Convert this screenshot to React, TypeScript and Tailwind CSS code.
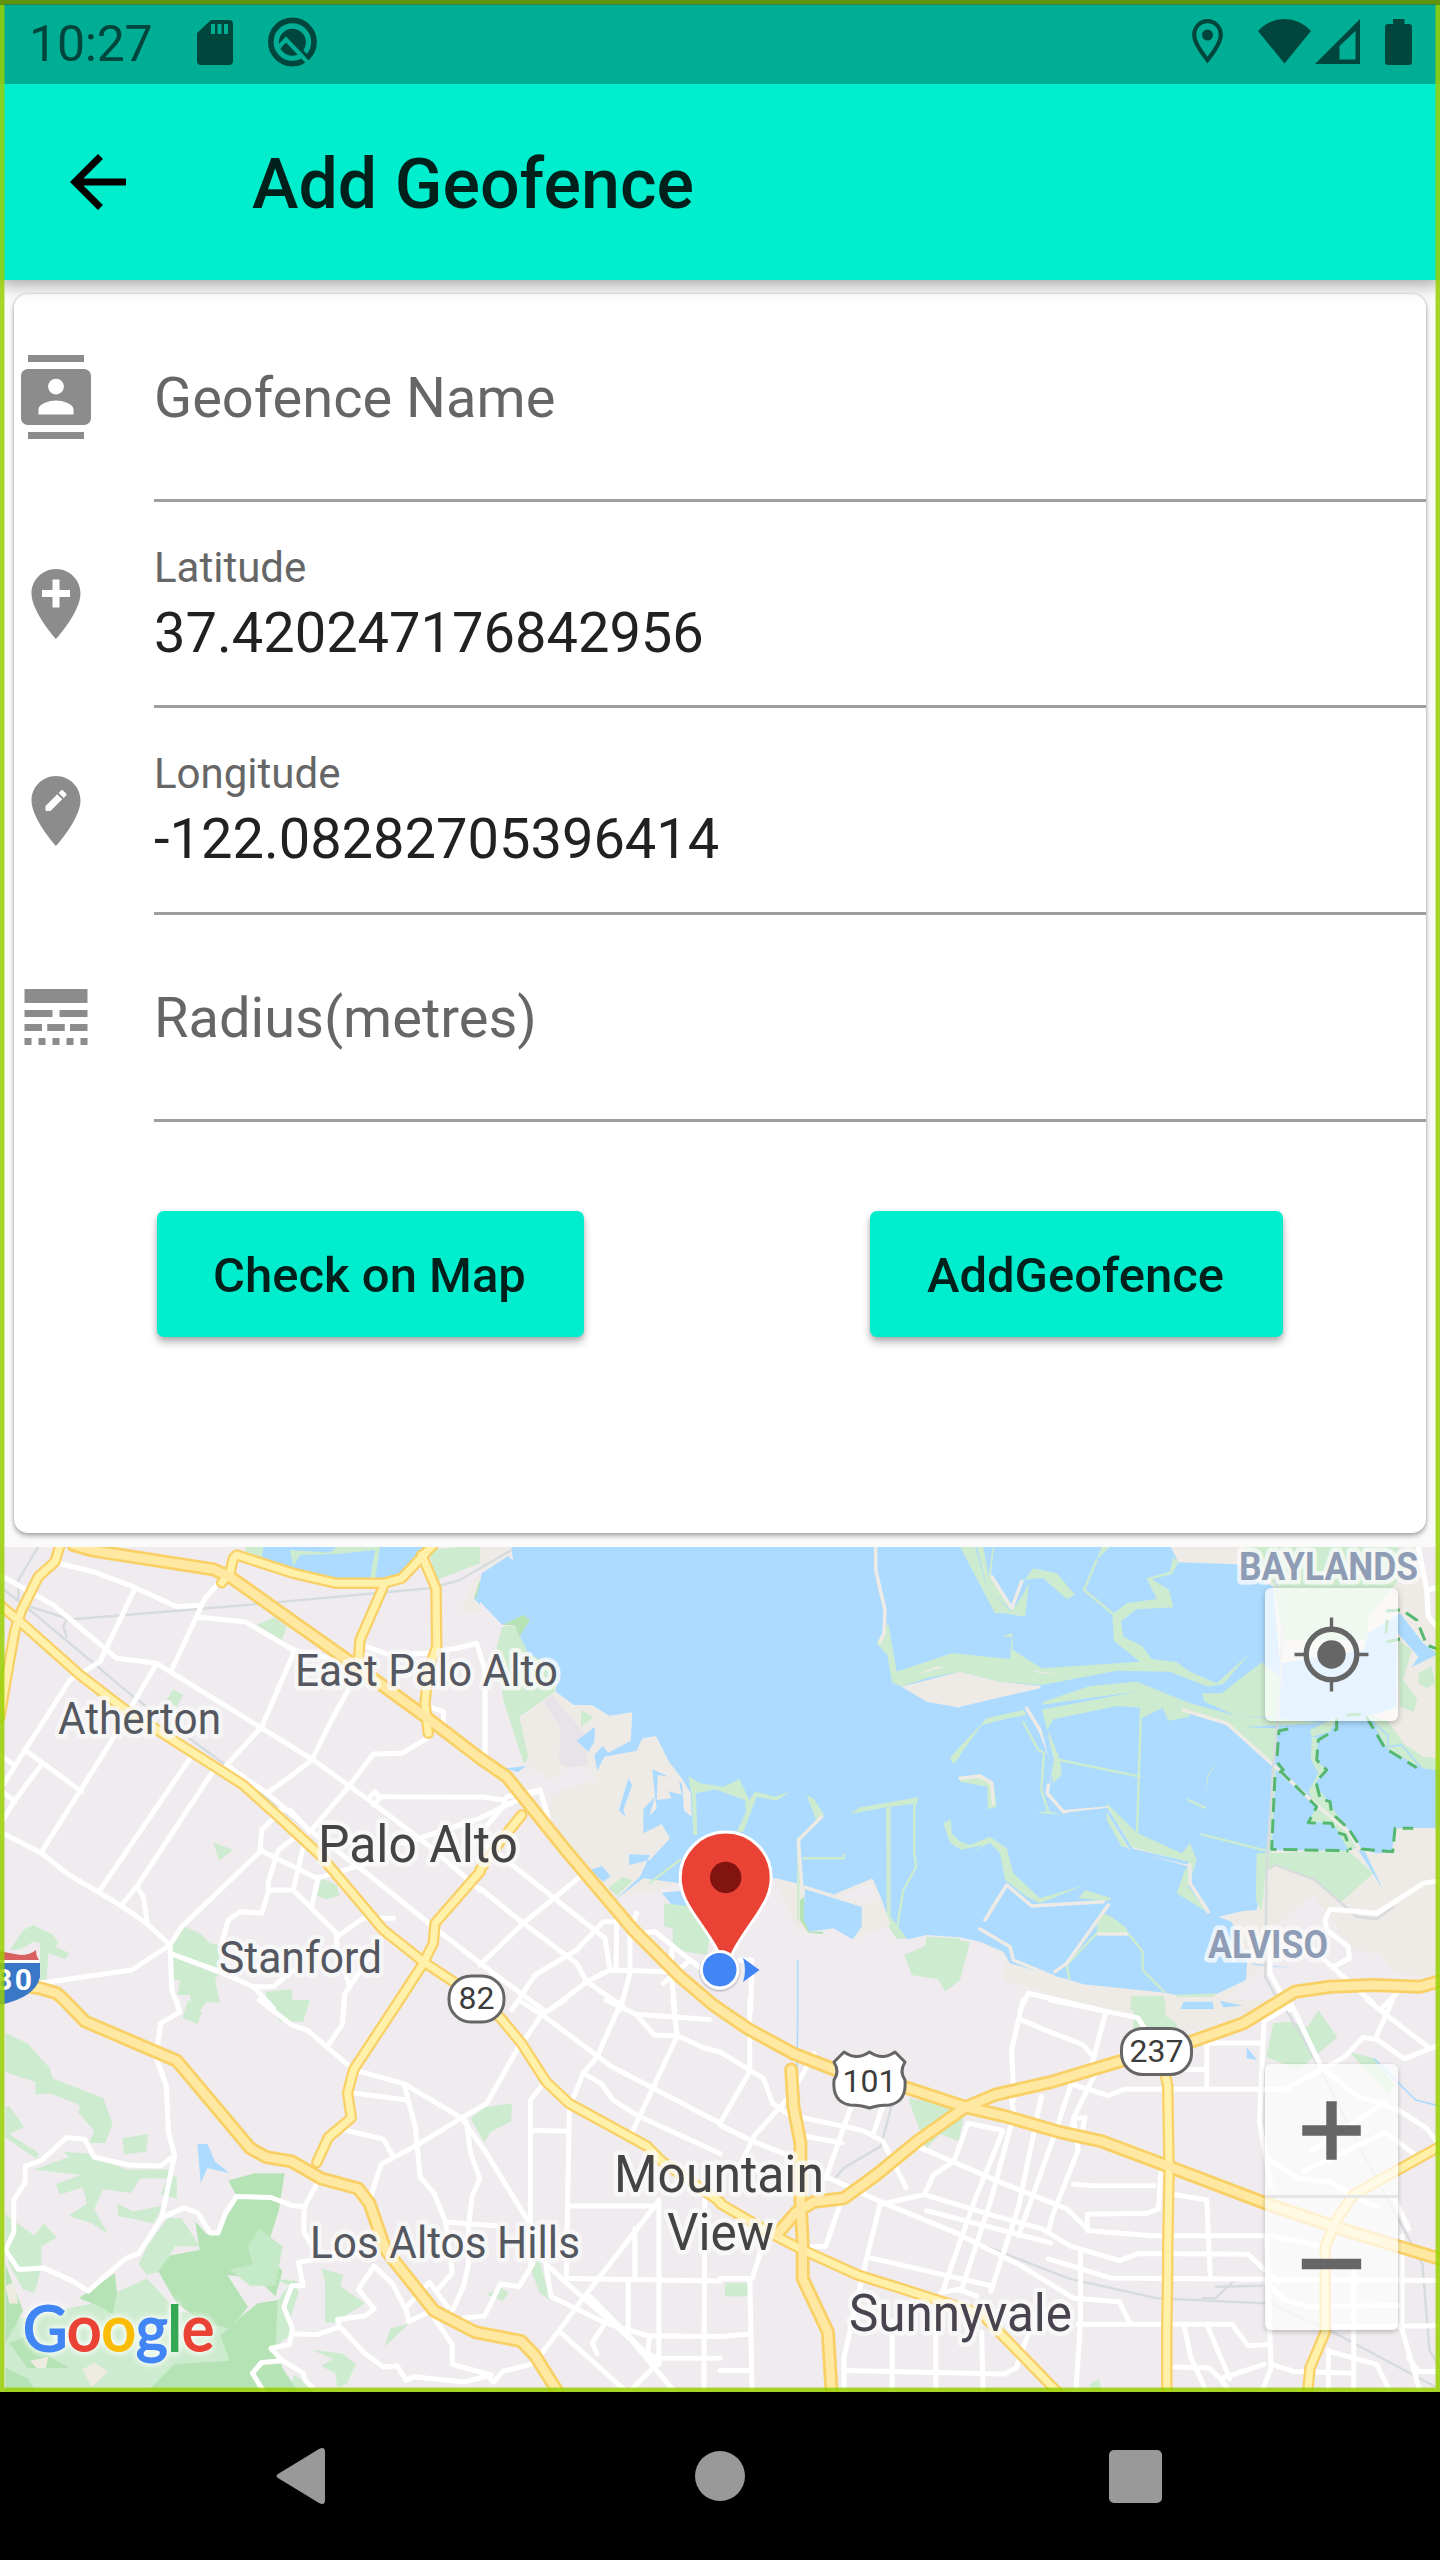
import React from "react";

type Frame = [number, number, number, number];

/* Map tiles: origin x, origin y, units per pixel in x and in y. */
const FRAMES: Record<string, Frame> = {
  A: [0, 1530, 3, 3],
  B: [480, 1530, 3, 3],
  C: [960, 1530, 3, 3],
  D: [0, 2000, 2.1778, 2.8],
  E: [720, 2000, 2.1778, 2.8],
};

/* "A 10,20 30,40 B 5,6" -> svg points; a letter switches the tile. */
function pts(source: string): string {
  let f = FRAMES.A;
  const out: string[] = [];
  for (const token of source.trim().split(/\s+/)) {
    if (FRAMES[token]) {
      f = FRAMES[token];
    } else {
      const [x, y] = token.split(",").map(Number);
      out.push(`${(f[0] + x / f[2]).toFixed(1)},${(f[1] + y / f[3]).toFixed(1)}`);
    }
  }
  return out.join(" ");
}

const beige = [
  "B 120,565 228,485 282,525 335,525 388,557 457,547 452,633 487,625 528,618 567,695 605,745 650,800 640,1000 600,1060 548,1075 530,1090 455,1090 400,1110 300,1030 250,960 210,940 210,800 260,775 350,750 325,712 240,712 245,730 210,750 140,700",
  "C 620,45 1380,45 1395,220 1440,300 1440,1350 1310,1330 1255,1270 1180,1260 1060,1095 950,1185 940,1290 880,1330 760,1445 420,1440 130,1350 135,1280 0,1200 200,1000 870,800 900,500",
  "B 885,1045 960,1063 975,1075 1000,1205 950,1195",
  "B 1145,1130 1200,1100 1230,1185 1118,1228",
  "B 0,50 93,50 90,78 0,125",
  "E 740,0 1240,0 1130,65 1000,90 900,60",
  "A 1440,130 1400,190 1385,245 1440,250",
];

const water = [
  "B 93,45 100,93 85,78 5,130 0,155 0,215 67,285 130,255 150,270 118,320 140,370 180,400 225,450 228,485 282,525 335,525 388,557 457,547 452,633 385,668 368,648 343,675 352,722 373,680 470,662 487,625 528,618 567,695 605,745 632,790 635,860 612,842 606,760 517,717 525,800 490,838 490,910 545,882 570,925 510,990 447,1005 447,973 510,975 480,1040 405,1110 490,1045 600,1060 890,1045 960,1063 975,1075 970,1170 988,1205 1060,1195 1118,1228 1145,1190 1145,1130 1065,1097 1175,1050 1200,1110 1225,1170 1250,1215 1285,1228 1340,1215 1440,1222 C 0,1222 60,1235 130,1265 150,1300 250,1330 330,1350 370,1363 615,1388 650,1395 770,1392 858,1350 862,1290 815,1175 775,1160 850,1143 890,1140 905,1060 935,960 1165,962 1195,950 1245,970 1295,968 1305,895 1440,893 1440,720 1390,715 1330,640 1285,650 1280,610 1220,560 1310,530 1310,305 1375,380 1355,412 1435,372 1390,340 1320,250 1225,310 1210,360 960,400 940,170 830,103 655,97 630,45",
  "A 785,50 1280,50 1205,145 1010,160 880,130 785,95",
  "B 290,632 345,590 343,635 325,665",
  "B 445,745 457,765 430,840 437,862 417,840",
  "B 330,1020 365,1008 392,1038 370,1055",
  "B 545,1088 630,1080 640,1125 603,1158",
  "B 75,715 138,708 115,726",
  "A 1440,160 1422,205 1440,225",
  "C 670,1415 758,1415 762,1437 662,1437",
  "C 780,1412 850,1427 790,1432",
  "C 870,1300 1000,1315 880,1305",
  "D 430,403 452,403 468,452 500,485 452,470 437,512",
  "D 527,965 560,952 567,970 533,987",
  "E 1147,133 1170,168 1147,163",
  "C 1195,960 1215,965 1270,1080",
];

const lightGreen = [
  "A 735,45 790,50 785,95 740,80",
  "A 870,60 990,68 1010,50 1140,50 1125,150 1110,148 1125,60 1010,72 900,75 880,110",
  "A 1285,60 1440,45 1440,100 1310,150",
  "A 770,285 825,262 860,290 845,330",
  "A 520,478 550,495 530,530 500,510",
  "A 640,937 700,960 657,992",
  "A 965,1045 1010,1065 1018,1097 980,1108 950,1097",
  "A 30,1260 70,1200 100,1185 160,1215 175,1240 165,1250 208,1270 195,1287 145,1270 140,1350 120,1350 120,1240 100,1235 60,1258",
  "A 510,1245 555,1190 600,1210 630,1240 655,1245 660,1330 520,1275",
  "A 520,1280 655,1335 645,1350 660,1420 620,1415 600,1440 575,1440 570,1395 532,1395 540,1350 522,1350",
  "A 797,1385 875,1378 877,1440 797,1420",
  "B 67,290 105,285 125,330 145,370 200,400 230,450 225,485 118,560 145,680 132,703 70,510 50,350",
  "B 303,540 340,562 303,590",
  "B 385,1073 430,1040 458,1052 410,1097",
  "B 553,1120 640,1130 690,1220 680,1275 600,1262 578,1250 578,1195 553,1190",
  "B 625,738 660,760 730,770 778,748 808,810 825,785 885,800 930,785 890,812 830,800 790,905 770,905 798,845 795,810 705,778 648,790 652,915 640,915 636,800",
  "B 980,795 1003,808 1032,855 1008,870",
  "B 1110,852 1140,832 1315,802 1312,820 1220,832",
  "B 1218,832 1232,832 1232,1160 1280,1225 1250,1228 1220,1180",
  "B 1340,1220 1440,1225 1440,1350 1395,1385 1375,1348 1295,1335 1273,1275 1335,1248",
  "B 1225,280 1250,425 1415,370 1440,372 1440,425 1340,445 1265,470 1237,458 1222,375 1190,340",
  "B 1410,683 1440,650 1440,680 1420,703",
  "B 1390,880 1412,868 1415,910 1440,935 1440,957 1410,938",
  "C 0,50 45,50 85,190 155,245 180,170 220,115 290,130 345,195 320,207 248,143 185,150 155,245 105,250",
  "C 50,50 70,50 95,190 155,245 110,225 85,190",
  "C 98,50 102,50 92,145 155,240 95,190 85,145",
  "C 105,245 155,243 185,200 207,158 195,260",
  "C 410,90 425,50 450,50",
  "C 640,80 655,97 635,133 575,147 627,180 640,232 530,238 483,273 490,320 545,347 575,387 650,397 690,425 770,460 870,370 790,462 745,470 630,425 470,422 245,465 120,455 0,425 0,372 150,387 155,322 125,318 157,310 158,360 245,415 540,395 462,333 457,253 500,220 590,207 560,145 630,125",
  "C 250,515 390,468 530,455 690,520 840,560 950,565 1090,580 860,590 830,598 780,577 680,540 690,560 625,572 608,533 545,565 543,533 470,528 280,568 262,600 245,540",
  "C 815,585 860,592 952,595 945,690 940,708",
  "C 0,650 80,565 190,540 200,555 145,565 65,585 0,675",
  "C 265,600 300,690 305,735 280,760 270,700",
  "C 440,820 530,908 665,970 690,940 710,990 685,1070 745,1148 650,1090 675,1020 690,1000 520,955 485,950 440,870",
  "C 230,848 265,843 310,855 440,865 330,856",
  "C 940,710 948,700 935,960 918,970",
  "C 890,970 1165,962 1240,1030 1145,1115 1065,1050 945,1005 918,1020 905,1143 887,1110",
  "C 725,490 785,490 905,397 960,440 955,560 835,560 735,515",
  "C 1055,620 1110,605 1130,565 1110,570 1050,600",
  "C 1055,620 1075,625 1068,690 1100,720 1065,760 1115,830 1165,900 1195,950 1165,960 1120,880 1045,875 1070,830 1045,785 1075,730 1053,690",
  "C 1225,550 1285,575 1330,640 1390,680 1430,685 1430,720 1385,715 1280,655",
  "C 1315,330 1355,360 1330,450 1372,510 1360,545 1320,530",
  "C 1375,430 1415,408 1425,460 1400,475 1375,460",
  "C 0,745 60,733 100,755 110,830 83,838 82,770 0,755",
  "C 0,935 30,945 90,920 140,955 160,1030 240,1105 375,1065 240,1120 200,1100 135,1050 120,970 90,938 35,968 70,945 0,960",
  "C 355,1105 375,1080 455,1105 445,1112",
  "C 430,1150 455,1160 500,1195 500,1210 410,1210 412,1175",
  "C 515,1398 610,1398 618,1440 510,1440",
  "C 0,1232 30,1235 0,1350",
  "C 650,1395 770,1390 760,1400 650,1402",
  "C 770,697 745,740 737,800 742,737",
  "C 855,50 1310,50 1355,90 1300,170 1225,260 1220,330 970,330 940,160 860,100",
  "D 12,92 60,122 108,190 115,220 225,275 245,345 230,400 195,400 205,365 170,315 175,295 110,262 77,265 77,230 12,202",
  "D 12,300 20,297 52,355 20,375 85,430 80,445 12,385",
  "D 267,387 323,375 318,425 270,432",
  "D 75,475 150,440 140,425 190,430 275,475 365,475 385,500 385,555 350,545 365,500 305,500 285,540 225,530 205,585 235,655 200,625 150,605 190,570 180,525 130,545 122,515 175,490",
  "D 255,570 290,592 355,575 335,625 258,605",
  "D 395,610 365,610 320,690 302,740 320,770 350,760 380,690 435,690",
  "D 12,600 75,660 95,625 123,665 90,690 90,750 75,820 50,810 20,740 12,690",
  "D 12,900 200,850 320,780 385,870 500,900 540,870 600,850 640,780 650,820 630,900 640,930 560,1010 470,1040 420,1098 12,1098",
  "D 397,50 410,0 440,35 430,67",
  "D 575,0 675,0 660,62 610,60",
  "D 1025,330 1058,300 1115,290 1113,340 1068,370 1055,400",
  "D 1155,750 1175,725 1197,840 1175,820",
  "D 700,752 748,770 740,800 795,850 725,905 708,902 708,790",
  "D 900,895 838,970 850,920 895,905",
  "D 680,980 745,990 775,1020 755,1075 735,1085 730,1045 700,1025 725,1005",
  "D 630,1098 640,1050 700,1098",
  "D 1060,825 1090,805 1108,820 1095,842",
  "E 410,275 480,290 535,300 520,395 480,375 450,415 425,330",
  "E 900,0 970,0 970,45 990,60 1000,85 900,80",
  "E 1205,65 1240,60 1280,75 1303,28 1345,105 1260,195 1190,160",
  "E 1370,145 1430,165 1470,240 1455,260",
  "E 12,792 65,792 65,830 10,830",
  "E 805,1075 825,1062 832,1098 808,1098",
];

/* Levees between the salt ponds */
const levees = [
  "B 970,985 1090,985 1092,974",
  "B 955,925 955,1170",
  "B 1303,810 1303,970 1309,1010 1270,1080 1250,1200",
  "B 510,1058 600,990",
  "C 372,180 457,250",
  "C 410,90 372,180",
  "C 190,577 235,660 252,668 244,780 265,845",
  "C 543,535 531,905",
  "C 300,690 540,740",
  "C 725,913 930,965",
  "C 685,810 735,833",
  "C 410,1210 320,1305 328,1345",
  "C 500,1205 548,1265 548,1320 612,1385",
];

const midGreen = [
  "B 67,285 130,255 150,270 118,320 105,285",
  "B 960,1110 972,1100 972,1170 988,1205 1030,1205 1028,1212 985,1208 960,1170",
  "A 1422,205 1440,150 1440,165 1428,205",
  "D 497,505 555,485 620,485 607,590 580,700 615,760 600,830 560,780 495,770 540,860 500,920 440,900 385,850 345,760 370,715 435,700 425,620 450,655 475,655 490,600 515,548",
  "D 172,835 250,765 255,820 245,880 220,860",
  "D 12,740 50,870 12,960",
  "D 480,940 560,850 605,840 600,970 615,1030 650,1098 320,1098 380,1020 500,1010",
  "D 12,1030 60,1060 80,1098 12,1098",
  "D 20,960 60,940 110,1000 150,1030 60,1030",
];

const meadow = ["D 565,640 615,690 600,800 545,800 500,755 550,740 540,690", "D 630,800 600,780 650,790"];

const clearings = [
  "D 65,1010 105,1000 100,1030 80,1030",
  "D 180,1035 205,1015 235,1040 200,1085",
  "D 12,800 30,790 40,850 20,850",
];

const sandLines = [
  "B 1187,50 1187,120 1215,240 1212,310 1200,335",
  "B 1025,860 955,930 965,1065",
  "B 975,1072 1145,1125",
  "B 1070,1095 1175,1052 1200,1110 1225,1180",
  "C 95,140 155,235 185,155",
  "C 200,535 240,600 275,690 262,790 310,845 440,835 510,955 690,1005 690,1060 745,1145",
  "C 670,540 800,580 940,705 1075,830 1160,900 1195,950",
  "C 75,1170 140,1065 215,1128 430,1115",
  "C 445,1125 320,1300 285,1325",
  "C 60,1197 150,1250 160,1290 280,1340",
  "C 0,745 60,738 95,760 100,820",
  "C 415,1212 500,1212",
];

const sandPolys = [
  "B 533,735 595,745 605,795 565,783 575,805 530,810",
  "B 525,800 508,858 530,835",
  "B 1265,470 1440,425 1440,533 1340,515",
  "C 0,425 120,455 243,468 240,475 0,530",
  "C 210,420 290,432 240,430",
  "B 1310,435 1370,408 1390,412",
];

const rails = [
  "A 115,50 55,150 55,210",
  "A 0,170 90,240 400,500 670,700 930,905",
  "A 90,230 200,265 190,290 200,320",
  "A 220,268 740,225 1290,175 1380,150 1440,115 B 0,115 95,60",
  "C 945,150 970,230 955,560 940,700 920,1020 915,1340 945,1395",
  "C 920,1020 945,1005 1065,1050 1190,1160 1250,1167 1300,1132",
  "E 1230,20 1310,200 1400,430 1530,740 1545,980 1568,1030",
  "E 580,690 760,780 950,835 1200,850 1350,940 1568,1090",
  "E 375,290 350,410 270,470 250,500",
  "E 1050,835 1080,835 1120,785",
  "E 1080,803 1180,800",
];

const streets = [
  "A 175,100 280,125 400,170 530,230 605,225",
  "A 0,135 160,225 350,385 470,400 940,690 1120,820 1290,950 1440,1080",
  "A 405,175 300,395 210,450 75,660 0,780",
  "A 660,155 615,205 515,420",
  "A 595,262 735,275 880,360 1060,400",
  "A 885,360 785,590 680,705 800,790 935,905 1100,1030 1300,1190 1440,1300",
  "A 470,400 330,640 125,965",
  "A 1045,480 1000,560 935,690 870,740 800,790",
  "A 75,660 245,785",
  "A 120,710 45,810 0,885",
  "A 0,675 35,700",
  "A 0,780 45,815",
  "A 0,905 125,970 200,1030 360,1125 440,1180 510,1245",
  "A 570,685 300,1080",
  "A 635,730 410,1070 365,1125",
  "A 410,1070 430,1100 442,1180",
  "A 1290,620 1205,670 1120,672 1050,765 930,905",
  "A 1140,800 1440,802",
  "A 1110,800 1125,785 1140,805 1120,825",
  "A 830,855 785,900 780,965 545,1190 510,1245",
  "A 780,960 950,1045 1100,1000",
  "A 895,915 835,960 805,1055 805,1085 785,1150 720,1145 685,1170 665,1240",
  "A 910,950 880,1080 805,1080",
  "A 880,1080 1010,1210 1010,1260 1050,1370",
  "A 955,1040 935,1130",
  "A 1010,1220 1090,1165 1180,1165",
  "A 120,1360 395,1320 510,1245 515,1380 540,1445",
  "A 510,1270 660,1325 760,1370 820,1435",
  "A 760,1370 820,1370 880,1320",
  "A 1130,1250 1035,1390 1030,1445",
  "A 1285,530 1330,545 1330,590",
  "A 1100,350 1170,375 1280,370 1370,355 1430,340 B 15,420 15,675",
  "A 820,840 870,840 930,905",
  "A 1210,940 1440,865 B 0,865 80,825 180,780 205,865",
  "B 0,800 75,810 70,830 0,910",
  "B 80,800 180,780",
  "B 0,935 90,1000 280,1150 375,1225 390,1320 570,1325",
  "B 0,1075 130,1180 290,1300 320,1355 430,1430",
  "B 300,1040 130,1180 0,1305",
  "B 410,1175 408,1320",
  "B 410,1175 370,1175 290,1260 165,1335 95,1440",
  "B 470,1150 450,1200 450,1330 420,1440",
  "B 390,1320 320,1355 210,1440",
  "B 0,1300 190,1440",
  "B 480,1210 525,1205 630,1290 670,1320",
  "B 575,1260 575,1350 585,1440",
  "B 630,1290 550,1360",
  "B 780,1290 815,1290 812,1440",
  "C 1375,50 1400,180 1405,260 1440,300",
  "C 1405,180 1440,170",
  "C 1440,1052 1390,1060 1250,1150 1110,1138 1095,1170 1100,1200 1165,1250 1168,1285 1120,1310",
  "C 930,1230 930,1330 990,1440",
  "C 1060,1260 1240,1420",
  "C 180,1440 205,1390 420,1440",
  "C 1260,1440 1310,1390",
  "D 385,0 390,35 350,65 340,160 362,240 367,370 380,435 352,610 302,710 272,725 192,815 155,785 95,750 40,755 12,700 30,650 30,560 55,510 55,465 90,450 145,385 185,390 205,440 280,462 350,465 380,435",
  "D 352,610 400,582 430,595 458,652 475,652 490,600 515,550 590,553 635,575 665,580",
  "D 565,0 635,70 670,85 765,190",
  "D 750,0 745,70 715,125",
  "D 770,195 880,235 1005,330 1060,430 1155,630 1190,740 1240,800 1370,945 1470,1098",
  "D 770,260 885,280",
  "D 880,235 905,360 915,495 945,540 970,620 985,765 950,815",
  "D 1005,330 910,405 830,460 805,560 835,650",
  "D 755,365 835,390 855,435",
  "D 1130,130 1060,290 1005,330",
  "D 1230,0 1180,40 1135,125",
  "D 1015,340 1025,430 1045,500 1028,550 1020,640 1020,740 1010,800 985,870",
  "D 970,622 1080,632",
  "D 690,515 662,580 662,650 680,690",
  "D 690,725 650,735 660,800 635,800 618,860 637,920 630,965 590,975 615,1010 570,1015 550,1045 575,1098",
  "D 615,1010 660,1045 665,1065 690,1098",
  "D 640,935 690,937 740,915 795,990 835,1028 865,1025 885,1065 900,1055 1010,1070 1070,1050 985,1020 985,965 940,880",
  "D 815,745 780,810 815,865 795,885 735,895 740,915",
  "D 815,745 855,795 885,870 890,900 940,870",
  "D 885,860 935,790 975,860",
  "D 1010,890 1055,885 1090,795 1130,803 1160,740",
  "D 1155,1020 1095,1040 1075,1070 1060,1050",
  "D 1180,240 1155,280 1155,740",
  "D 1155,365 1235,367",
  "D 1355,0 1300,160 1270,205 1240,300 1233,780",
  "D 1130,0 1190,50 1330,185 1420,245 1568,345",
  "D 1270,205 1310,235 1335,280 1390,325 1568,430",
  "D 1475,100 1375,375",
  "D 1320,0 1385,40 1425,98 1475,100 1535,135 1568,145",
  "D 1385,40 1545,55",
  "D 1465,0 1475,100",
  "D 1240,577 1420,577",
  "D 1430,570 1285,810 1180,990",
  "D 1435,560 1435,940 1435,1020",
  "D 1383,640 1383,780",
  "D 1235,780 1568,787",
  "D 1368,785 1368,945",
  "D 1190,750 1200,830 1320,905 1410,940 1568,942",
  "D 1285,830 1430,1020 1370,1098",
  "D 1220,930 1365,1098",
  "D 1315,910 1290,960 1300,990",
  "D 1415,940 1410,990 1435,1003 1568,1003",
  "D 1535,560 1533,1098",
  "E 65,0 65,200 0,345",
  "E 0,145 95,220 115,290 150,320 200,335 310,365 355,395 405,525",
  "E 205,150 155,265 75,380 30,500",
  "E 0,350 70,395 190,455",
  "E 180,380 265,400",
  "E 285,300 230,500",
  "E 355,295 335,370",
  "E 240,500 350,565 510,650 650,740 770,835 870,845 890,900",
  "E 265,560 230,690 190,690",
  "E 350,565 320,720 270,1000 270,1098",
  "E 350,572 445,545 600,605 700,640 765,690 870,730 910,710 1150,712 1215,790",
  "E 445,545 465,490 510,450 540,345 615,365",
  "E 430,410 610,510 755,585 800,640",
  "E 615,370 555,560 485,815",
  "E 635,280 640,320 590,560 525,815",
  "E 700,270 650,580 590,815",
  "E 765,235 725,390 650,660",
  "E 825,185 770,330 780,420 725,600 715,650",
  "E 840,35 810,180",
  "E 660,0 635,140 640,280",
  "E 655,55 710,85 790,125 815,160",
  "E 720,0 910,50 925,80",
  "E 765,235 845,268 880,250 1230,250 1360,160 1400,105 1430,110 1490,165 1568,125",
  "E 320,720 590,800",
  "E 450,590 720,680",
  "E 800,640 800,600 930,597 955,585 960,480",
  "E 770,515 810,520 945,520",
  "E 800,645 940,660 1200,660 1310,690",
  "E 715,725 850,778 970,780 1568,785",
  "E 785,700 785,900 775,1098",
  "E 990,545 1060,560 1068,780",
  "E 780,908 1115,908 1150,968 1200,965",
  "E 1060,120 1060,245",
  "E 1000,120 1180,120",
  "E 1000,195 1060,195",
  "E 1235,20 1185,60 1175,340 1200,520",
  "E 1240,0 1310,190 1390,270 1480,310 1540,360 1568,410",
  "E 1410,0 1540,130",
  "E 1465,0 1430,100",
  "E 1190,440 1260,500 1330,510 1370,540 1430,580",
  "E 1270,480 1450,370 1510,430",
  "E 1290,420 1450,285",
  "E 1190,660 1200,1030 1180,1098",
  "E 1185,1020 1090,1060 1065,1030 990,1028",
  "E 1010,908 1025,1000 1060,1098",
  "E 1090,1060 1110,1098",
  "E 1060,908 1110,1060",
  "E 1200,1020 1250,1040 1380,1045",
  "E 1190,790 1230,840 1280,858 1478,855",
  "E 1380,760 1380,1098",
  "E 1325,980 1325,1098",
  "E 1330,985 1430,1020 1460,1098",
  "E 1485,660 1485,920 1525,1098",
  "E 1340,915 1568,912",
  "E 1500,640 1470,560",
  "E 65,780 70,1098",
  "E 70,780 90,700",
  "E 0,780 65,780",
  "E 0,942 65,935",
  "E 0,1037 65,1037",
  "E 375,900 375,1098",
  "E 470,900 470,1098",
  "E 570,930 573,1098",
  "E 270,1037 620,1047 645,1030 670,940",
  "E 480,820 520,810 560,830",
  "E 765,380 770,330 795,330 790,360",
  "E 1568,1040 1520,1040 1500,1000",
];

const yellowRoads = [
  "A 0,225 60,275 240,435 370,535 660,720 730,765 830,855 960,975 1150,1200 1270,1295 1360,1355 D 1090,50 1135,120 1190,230 1240,290 1410,410 1440,450 1568,565 E 0,570 120,660 180,700 300,770 400,810 570,880 735,1098",
  "A 180,45 165,95 115,140 65,240 45,300 20,440 0,560",
  "A 665,158 690,130 700,85 710,75 880,130 1010,160 1150,160 1205,145 1285,60 1300,45",
  "A 1265,75 1308,175 1310,350 1285,420 1275,520 1285,610",
  "A 1150,170 1080,330 1075,400",
  "B 125,855 60,935 0,1020 A 1440,1025 1305,1180 1300,1240 1270,1300 D 870,0 770,195 757,260 765,330 715,385 690,455",
  "E 970,210 975,240 978,480 975,700 975,760 973,920 973,1098",
  "E 1568,410 1380,545 1345,610 1318,690 1318,930 1285,1030 1280,1098",
];

const highways = [
  "A 220,45 280,62 640,118 690,140 880,275 1050,395 1290,570 1440,685 B 0,685 80,740 265,970 460,1200 600,1340 700,1425 E 60,80 160,150 250,195 405,245 535,300 620,325 740,370 830,395 975,465 1190,570 1350,640 1530,710 1568,725",
  "E 125,655 165,595 205,565 270,555 340,490 430,395 535,300 600,265 720,230 875,170 1030,115 1140,65 C 1005,1385 1110,1370 1240,1365 1380,1370 1435,1355",
  "A 60,1365 120,1375 170,1390 D 140,0 185,60 385,170 545,415 580,440 635,452 700,500 780,528 805,570 840,700 945,870 1035,930 1135,955 1165,995 1215,1098",
  "E 155,195 160,300 175,400 175,560 180,680 180,780 235,930 243,1098",
];

const trails = [
  "C 985,597 957,602 950,695 970,720 945,735 935,958 1165,962",
  "C 960,722 1070,830 1045,878 1115,880 1125,905 1155,915 1172,960",
  "C 1130,565 1130,598 1075,630 1070,690 1100,720 1068,755 1080,805 1110,815 1115,850 1165,895 1205,957 1298,965 1305,895 1360,895",
  "C 1160,555 1215,553 1275,655 1370,713",
  "C 1320,327 1283,335 1278,315 1283,242 1325,240 1370,270 1400,345 1435,358",
];

function Polys({ items, fill }: { items: string[]; fill: string }) {
  return (
    <g fill={fill}>
      {items.map((s) => (
        <polygon key={s} points={pts(s)} />
      ))}
    </g>
  );
}

function Lines({ items, color, width, dash }: { items: string[]; color: string; width: number; dash?: string }) {
  return (
    <g fill="none" stroke={color} strokeWidth={width} strokeLinejoin="round" strokeLinecap={dash ? "butt" : "round"} strokeDasharray={dash}>
      {items.map((s) => (
        <polyline key={s} points={pts(s)} />
      ))}
    </g>
  );
}

type LabelProps = { x: number; y: number; w: number; size: number; color: string; weight?: number; children: string };

function Label({ x, y, w, size, color, weight = 400, children }: LabelProps) {
  return (
    <text
      x={x}
      y={y}
      textLength={w}
      lengthAdjust="spacingAndGlyphs"
      fontSize={size}
      fontWeight={weight}
      fill={color}
      stroke="#fafafa"
      strokeOpacity={0.8}
      strokeWidth={9}
      strokeLinejoin="round"
      paintOrder="stroke"
    >
      {children}
    </text>
  );
}

function BayMap() {
  return (
    <svg className="block h-full w-full font-[Roboto,sans-serif]" viewBox="0 1547 1440 845">
      <rect x="0" y="1547" width="1440" height="845" fill="#efebef" />
      <Polys items={beige} fill="#eeebe6" />
      <polygon points={pts("B 190,515 215,495 310,605 325,705 265,713 238,700 240,590")} fill="#e8e3e8" />
      <Polys items={water} fill="#addbff" />
      <Polys items={lightGreen} fill="#cdebce" />
      <Lines items={levees} color="#cdebce" width={2.4} />
      <Polys items={midGreen} fill="#b5e3b5" />
      <Polys items={meadow} fill="#c5eac8" />
      <Polys items={clearings} fill="#eeebe0" />
      <polygon points={pts("C 240,525 540,483 240,540")} fill="#addbff" />
      <Polys items={sandPolys} fill="#eeebe6" />
      <Lines items={sandLines} color="#eeebe6" width={3.5} />
      <polyline points={pts("C 235,535 275,690 262,760")} stroke="#addbff" strokeWidth="4.5" fill="none" />
      <polyline points={pts("C 320,852 440,838 515,960 685,1000")} stroke="#addbff" strokeWidth="3" fill="none" />
      <Lines items={["B 953,1290 953,1440 E 168,190 172,300", "E 1425,165 1515,280 1568,297", "C 1220,560 1283,615 1283,650 1325,645 1390,720"]} color="#addbff" width={1.6} />
      <Lines items={rails} color="#d6dcdd" width={2.4} />
      <Lines items={streets} color="#ffffff" width={5} />
      <Lines items={yellowRoads} color="#f9d066" width={11.5} />
      <Lines items={highways} color="#f9d066" width={14} />
      <Lines items={yellowRoads} color="#fff0aa" width={7} />
      <Lines items={highways} color="#ffe9a2" width={8.5} />
      <Lines items={trails} color="#55b871" width={3} dash="14 7" />

      <Label x={295} y={1686} w={263} size={44.5} color="#555860">East Palo Alto</Label>
      <Label x={58} y={1734} w={163} size={44.5} color="#555860">Atherton</Label>
      <Label x={318} y={1862} w={200} size={51.5} color="#444444">Palo Alto</Label>
      <Label x={219} y={1973} w={163} size={44.5} color="#555860">Stanford</Label>
      <Label x={614} y={2192} w={210} size={51.5} color="#444444">Mountain</Label>
      <Label x={667} y={2250} w={107} size={51.5} color="#444444">View</Label>
      <Label x={310} y={2258} w={270} size={44.5} color="#555860">Los Altos Hills</Label>
      <Label x={849} y={2331} w={223} size={51.5} color="#48434f">Sunnyvale</Label>
      <Label x={1239} y={1580} w={179} size={38.5} color="#8e9db5" weight={700}>BAYLANDS</Label>
      <Label x={1208} y={1957.5} w={120} size={38.5} color="#8e9db5" weight={700}>ALVISO</Label>

      {/* Route shields */}
      <g fill="#ffffff" stroke="#666666" strokeWidth="3">
        <rect x="449" y="1976" width="55" height="46" rx="22" />
        <rect x="1121.5" y="2028.5" width="70" height="46" rx="21" />
        <path d="M844 2052q12.500 9 25.500 0q13 9 25.500 0l10 10q-6 10 0 18q2 22-16 25q-11 0-19.500 3q-8.500-3-19.500-3q-18-3-16-25q6-8 0-18z" strokeLinejoin="round" />
      </g>
      <g fill="#3c3c3c" fontSize="32" textAnchor="middle">
        <text x="476.5" y="2009">82</text>
        <text x="1156.5" y="2062">237</text>
        <text x="869.5" y="2091.5">101</text>
      </g>
      <path d="M0 1951q8 2 21 4q9 0 15-5q0 6 3 10H0z" fill="#d96060" />
      <path d="M0 1960H39v3H0z" fill="#ffffff" />
      <path d="M0 1963H40V1977q-4 20-40 28z" fill="#3878c7" />
      <text x="-5" y="1990" fontSize="30" fontWeight="700" fill="#ffffff" textLength="37">80</text>

      {/* Attribution */}
      <g className="[filter:drop-shadow(0_0_3px_rgba(255,255,255,.8))_drop-shadow(0_0_3px_rgba(255,255,255,.8))]">
        <text x="23" y="2350.5" fontSize="62" textLength="191" lengthAdjust="spacingAndGlyphs" className="font-[Lato,sans-serif]" strokeWidth="2">
          <tspan fill="#4285f4" stroke="#4285f4">G</tspan>
          <tspan fill="#ea4335" stroke="#ea4335">o</tspan>
          <tspan fill="#fbbc05" stroke="#fbbc05">o</tspan>
          <tspan fill="#4285f4" stroke="#4285f4">g</tspan>
          <tspan fill="#34a853" stroke="#34a853">l</tspan>
          <tspan fill="#ea4335" stroke="#ea4335">e</tspan>
        </text>
      </g>

      {/* Marker and current position */}
      <path d="M725.7 1832a45.5 45.5 0 0 1 45.5 45.5c0 14-6 25-14 37c-17 25-26 36-31.500 58c-5.500-22-14.500-33-31.500-58c-8-12-14-23-14-37a45.500 45.500 0 0 1 45.500-45.500z" fill="#ea4335" stroke="#ffffff" strokeWidth="3" />
      <circle cx="725.7" cy="1877.500" r="15.700" fill="#811411" />
      <circle cx="719.700" cy="1971" r="21" fill="#000000" opacity="0.12" />
      <circle cx="719.700" cy="1969.700" r="18.300" fill="#4285f4" stroke="#ffffff" strokeWidth="3" />
      <path d="M743 1958l16.500 12l-16.500 12q4-12 0-24z" fill="#4285f4" />
    </svg>
  );
}

const MAT = "h-[84px] w-[84px] shrink-0";

const ContactsIcon = () => (
  <svg className={MAT} viewBox="0 0 24 24" fill="#8c8c8c">
    <path d="M20 0H4v2h16V0zM4 24h16v-2H4v2zM20 4H4c-1.100 0-2 .9-2 2v12c0 1.100.9 2 2 2h16c1.100 0 2-.9 2-2V6c0-1.100-.9-2-2-2zm-8 2.750c1.240 0 2.250 1.010 2.250 2.250s-1.010 2.250-2.250 2.250S9.750 10.240 9.750 9 10.760 6.750 12 6.750zM17 17H7v-1.500c0-1.670 3.330-2.500 5-2.500s5 .83 5 2.500V17z" />
  </svg>
);
const AddLocationIcon = () => (
  <svg className={MAT} viewBox="0 0 24 24" fill="#8c8c8c">
    <path d="M12 2C8.140 2 5 5.140 5 9c0 5.250 7 13 7 13s7-7.750 7-13c0-3.860-3.140-7-7-7zm4 8h-3v3h-2v-3H8V8h3V5h2v3h3v2z" />
  </svg>
);
const EditLocationIcon = () => (
  <svg className={MAT} viewBox="0 0 24 24" fill="#8c8c8c">
    <path d="M12 2C8.140 2 5 5.140 5 9c0 5.250 7 13 7 13s7-7.750 7-13c0-3.860-3.140-7-7-7zm-1.560 10H9v-1.440l3.350-3.340 1.430 1.430L10.440 12zm4.450-4.450l-.7.700-1.440-1.440.7-.7c.150-.150.390-.150.540 0l.9.900c.150.150.150.390 0 .540z" />
  </svg>
);
const LineStyleIcon = () => (
  <svg className={MAT} viewBox="0 0 24 24" fill="#8c8c8c">
    <path d="M3 16h5v-2H3v2zm6.500 0h5v-2h-5v2zm6.500 0h5v-2h-5v2zM3 20h2v-2H3v2zm4 0h2v-2H7v2zm4 0h2v-2h-2v2zm4 0h2v-2h-2v2zm4 0h2v-2h-2v2zM3 12h8v-2H3v2zm10 0h8v-2h-8v2zM3 4v4h18V4H3z" />
  </svg>
);

function Field({ icon, label, value }: { icon: React.ReactNode; label: string; value?: string }) {
  return (
    <div className="flex h-[206.7px] items-center">
      <div className="-mt-[2px]">{icon}</div>
      <div className="ml-14 flex h-full flex-1 flex-col border-b-[3px] border-[#9e9e9e]">
        {value ? (
          <>
            <div className="mt-[41px] text-[42px] leading-[49px] text-[#666666]">{label}</div>
            <div className="mt-2 text-[56px] leading-[66px] text-[#212121]">{value}</div>
          </>
        ) : (
          <div className="mt-[70px] text-[56px] leading-[66px] text-[#666666]">{label}</div>
        )}
      </div>
    </div>
  );
}

function StatusBar() {
  return (
    <div className="relative z-20 flex h-[84px] shrink-0 items-start bg-black/[0.267] text-[#00463c]">
      <span className="ml-[29px] mt-[15px] w-[125px] text-[50px] leading-[58px] tracking-[-0.2px]">10:27</span>
      <svg className="ml-[43px] mt-5 h-[45px] w-9" viewBox="0 0 36 45" fill="currentColor" fillRule="evenodd">
        <path d="M14 0H32a4 4 0 0 1 4 4V41a4 4 0 0 1-4 4H4a4 4 0 0 1-4-4V13zM14 4v10h4V4zM20.500 4v10h4V4zM27 4v10h4V4z" />
      </svg>
      <svg className="ml-[35px] mt-[17px] h-[50px] w-[50px]" viewBox="0 0 50 50" fill="none">
        <circle cx="24.400" cy="25" r="21.600" stroke="currentColor" strokeWidth="5.600" />
        <circle cx="24.400" cy="25.300" r="13.500" fill="currentColor" />
        <path d="M9 32L18 22.500L40.500 46" stroke="#02af96" strokeWidth="4" />
        <path d="M34 34L41 41.500" stroke="currentColor" strokeWidth="3" />
      </svg>
      <svg className="ml-auto mt-[19px] h-[45px] w-[31px]" viewBox="0 0 31 45" fill="none">
        <path d="M15.500 2.200C8 2.200 2.200 8 2.200 16C2.200 25 11 35 15.500 41C20 35 28.800 25 28.800 16C28.800 8 23 2.200 15.500 2.200z" stroke="currentColor" strokeWidth="4.200" />
        <circle cx="15.500" cy="16" r="5.500" fill="currentColor" />
      </svg>
      <svg className="ml-[35px] mt-[19px] h-[45px] w-[53px]" viewBox="0 0 53 45" fill="currentColor">
        <path d="M26.500 44.500L0 12Q11 0 26.500 0T53 12z" />
      </svg>
      <svg className="ml-1 mt-[19px] h-[45px] w-[45px]" viewBox="0 0 45 45" fill="currentColor" fillRule="evenodd">
        <path d="M45 0V45H0zM40.500 12L24.500 27V40.500H40.500z" />
      </svg>
      <svg className="ml-[25px] mr-7 mt-[19px] h-[46px] w-[27px]" viewBox="0 0 27 46" fill="currentColor">
        <path d="M8 0H19.500V5H24a3 3 0 0 1 3 3V43a3 3 0 0 1-3 3H3a3 3 0 0 1-3-3V8a3 3 0 0 1 3-3H8z" />
      </svg>
    </div>
  );
}

const BUTTON =
  "h-[126px] rounded-[7px] bg-[#00eecd] pr-[2px] pt-[3px] text-[49px] font-medium text-[#00201b] shadow-[0_6px_8px_rgba(0,0,0,0.24),0_2px_5px_rgba(0,0,0,0.14)]";

export default function App() {
  return (
    <div className="flex h-[2560px] w-[1440px] flex-col overflow-hidden bg-black font-[Roboto,sans-serif]">
      <div className="relative flex h-[2392px] flex-col bg-[#fafafa]">
        <div className="relative z-10 bg-[#00eecd] shadow-[0_4px_16px_rgba(0,0,0,0.36)]">
          <StatusBar />
          <header className="flex h-[196px] items-center">
            <svg className="ml-14 h-[84px] w-[84px]" viewBox="0 0 24 24" fill="#000000">
              <path d="M20 11H7.830l5.590-5.590L12 4l-8 8 8 8 1.410-1.410L7.830 13H20v-2z" />
            </svg>
            <h1 className="ml-28 mt-[3px] text-[70px] font-medium leading-[82px] text-[#00201b]">Add Geofence</h1>
          </header>
        </div>

        <main className="mx-[14px] mt-[14px] h-[1239px] shrink-0 rounded-[14px] bg-white pt-px shadow-[0_3px_5px_rgba(0,0,0,0.3),0_0_3px_rgba(0,0,0,0.18)]">
          <Field icon={<ContactsIcon />} label="Geofence Name" />
          <Field icon={<AddLocationIcon />} label="Latitude" value="37.420247176842956" />
          <Field icon={<EditLocationIcon />} label="Longitude" value="-122.08282705396414" />
          <Field icon={<LineStyleIcon />} label="Radius(metres)" />
          <div className="mt-[89px] flex pl-[143px]">
            <button className={`${BUTTON} w-[427px]`}>Check on Map</button>
            <button className={`${BUTTON} ml-[286px] w-[413px]`}>AddGeofence</button>
          </div>
        </main>

        <section className="relative mt-[14px] h-[845px] shrink-0">
          <BayMap />
          <button className="absolute right-[42px] top-[41px] h-[133px] w-[133px] rounded-[6px] bg-white/70 shadow-[0_2px_6px_rgba(0,0,0,0.25)]">
            <svg className="h-full w-full" viewBox="-66.500 -66.500 133 133" fill="none" stroke="#666666">
              <circle r="25.300" strokeWidth="5.400" />
              <circle r="14.200" fill="#666666" stroke="none" />
              <path d="M0-37V-25M0 25V37M-37 0H-25M25 0H37" strokeWidth="3.400" />
            </svg>
          </button>
          <div className="absolute right-[42px] top-[517px] flex h-[266px] w-[133px] flex-col rounded-[6px] bg-white/70 shadow-[0_2px_5px_rgba(0,0,0,0.22)]">
            <button className="h-[134px] border-b-[3px] border-[#e6e6e6]">
              <svg className="h-full w-full" viewBox="-66.500 -66.500 133 133" stroke="#666666" strokeWidth="10.600">
                <path d="M-29.700 1H29.700M0-28.700V30.700" />
              </svg>
            </button>
            <button className="h-[132px]">
              <svg className="h-full w-full" viewBox="-66.500 -66 133 132" stroke="#666666" strokeWidth="10.600">
                <path d="M-29.700 0H29.700" />
              </svg>
            </button>
          </div>
        </section>

        <div className="pointer-events-none absolute inset-0 z-10 border-4 border-[#98cf02]/85" />
        <div className="pointer-events-none absolute inset-1 z-10 border border-[#98cf02]/40" />
        <div className="pointer-events-none absolute inset-x-0 top-0 z-20 h-[5px] bg-black/[0.267]" />
      </div>

      <nav className="flex h-[168px] items-center text-[#999999]">
        <svg className="ml-[276px] h-14 w-[49px]" viewBox="0 0 49 56" fill="currentColor">
          <path d="M2 26L43 1Q49-2 49 4V52Q49 58 43 55L2 30Q-1 28 2 26z" />
        </svg>
        <div className="ml-[370px] h-[50px] w-[50px] rounded-full bg-[#999999]" />
        <div className="ml-[364px] h-[53px] w-[53px] rounded-[5px] bg-[#999999]" />
      </nav>
    </div>
  );
}
